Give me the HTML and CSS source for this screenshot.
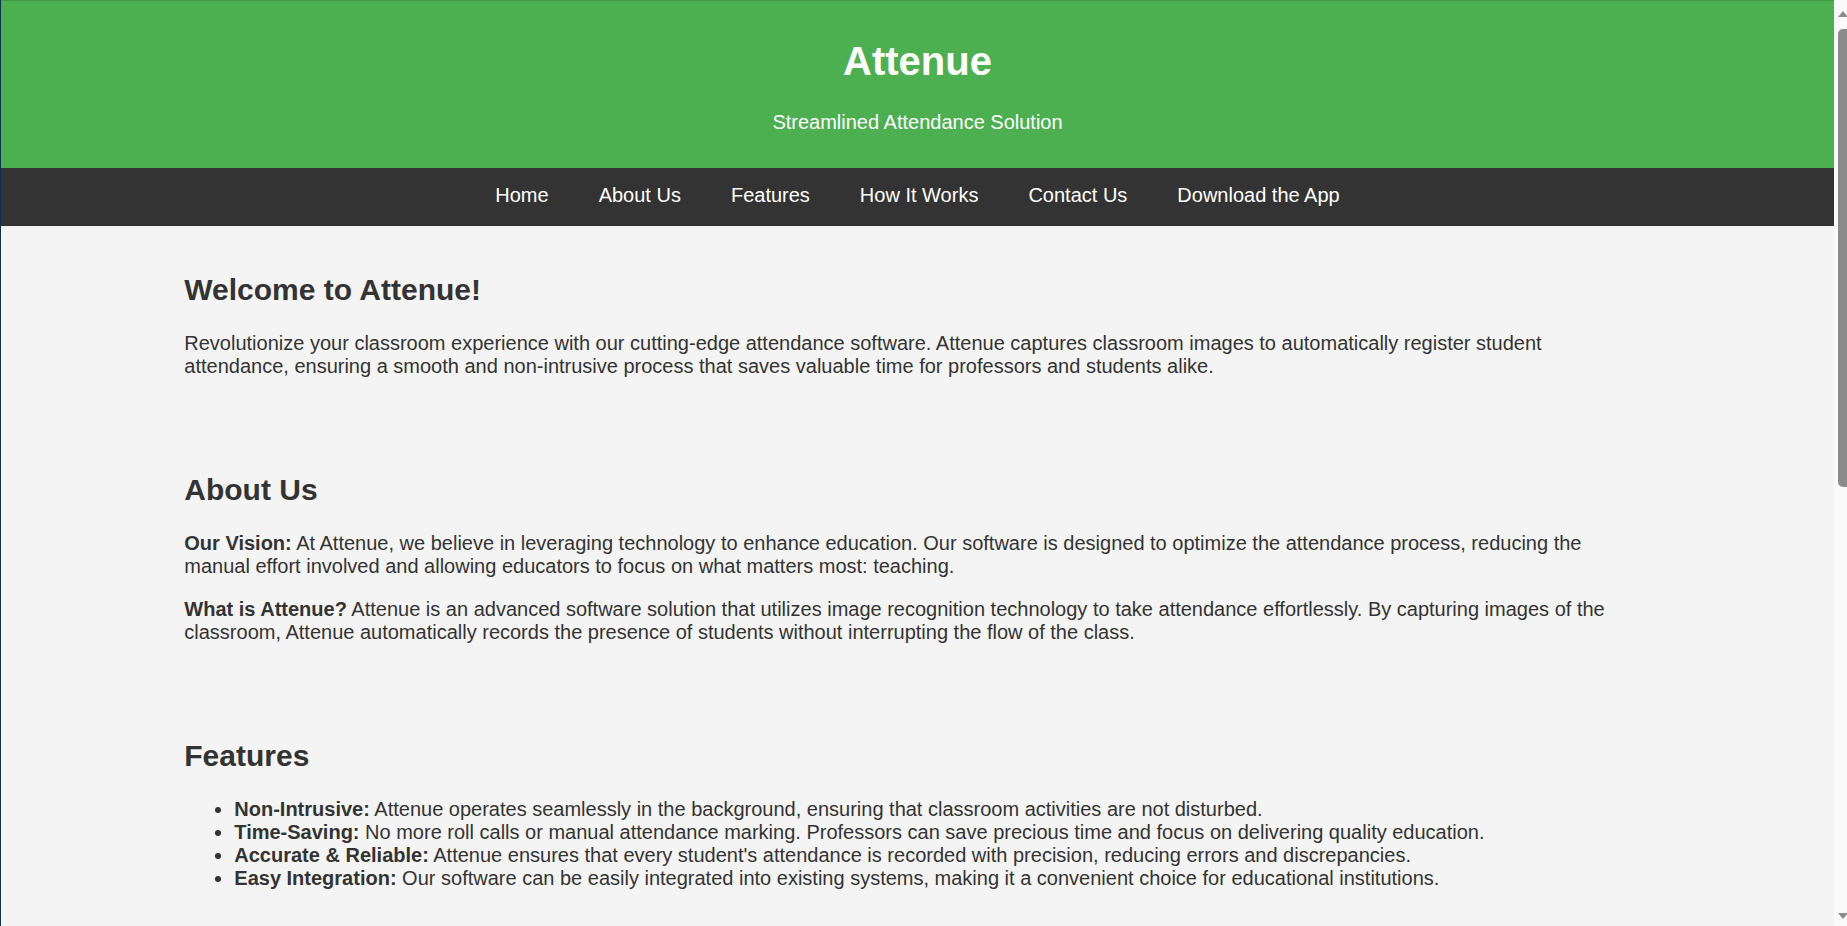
FILE: index.html
```html
<!DOCTYPE html>
<html lang="en">
<head>
<meta charset="utf-8">
<title>Attenue - Streamlined Attendance Solution</title>
<link rel="stylesheet" href="styles.css">
</head>
<body>
<header class="site-header">
  <h1 class="site-title">Attenue</h1>
  <p class="site-tagline">Streamlined Attendance Solution</p>
</header>
<nav class="site-nav">
  <a class="nav-link" href="#home">Home</a>
  <a class="nav-link" href="#about">About Us</a>
  <a class="nav-link" href="#features">Features</a>
  <a class="nav-link" href="#how">How It Works</a>
  <a class="nav-link" href="#contact">Contact Us</a>
  <a class="nav-link" href="#download">Download the App</a>
</nav>
<main class="content">
  <section class="section" id="home">
    <h2 class="section-title">Welcome to Attenue!</h2>
    <p class="text">Revolutionize your classroom experience with our cutting-edge attendance software. Attenue captures classroom images to automatically register student attendance, ensuring a smooth and non-intrusive process that saves valuable time for professors and students alike.</p>
  </section>
  <section class="section" id="about">
    <h2 class="section-title">About Us</h2>
    <p class="text"><strong>Our Vision:</strong> At Attenue, we believe in leveraging technology to enhance education. Our software is designed to optimize the attendance process, reducing the manual effort involved and allowing educators to focus on what matters most: teaching.</p>
    <p class="text"><strong>What is Attenue?</strong> Attenue is an advanced software solution that utilizes image recognition technology to take attendance effortlessly. By capturing images of the classroom, Attenue automatically records the presence of students without interrupting the flow of the class.</p>
  </section>
  <section class="section" id="features">
    <h2 class="section-title">Features</h2>
    <ul class="list">
      <li><strong>Non-Intrusive:</strong> Attenue operates seamlessly in the background, ensuring that classroom activities are not disturbed.</li>
      <li><strong>Time-Saving:</strong> No more roll calls or manual attendance marking. Professors can save precious time and focus on delivering quality education.</li>
      <li><strong>Accurate &amp; Reliable:</strong> Attenue ensures that every student's attendance is recorded with precision, reducing errors and discrepancies.</li>
      <li><strong>Easy Integration:</strong> Our software can be easily integrated into existing systems, making it a convenient choice for educational institutions.</li>
    </ul>
  </section>
  <section class="section" id="how">
    <h2 class="section-title">How It Works</h2>
    <ol class="list">
      <li><strong>Capture:</strong> A camera in the classroom takes images at the start of the lecture.</li>
      <li><strong>Recognize:</strong> Attenue identifies the students present using image recognition.</li>
      <li><strong>Register:</strong> Attendance is recorded automatically in the system.</li>
      <li><strong>Review:</strong> Professors can review and export attendance reports at any time.</li>
    </ol>
  </section>
  <section class="section" id="contact">
    <h2 class="section-title">Contact Us</h2>
    <p class="text">Have questions or want to bring Attenue to your institution? We'd love to hear from you.</p>
    <p class="text"><strong>Email:</strong> contact@attenue.com</p>
  </section>
  <section class="section" id="download">
    <h2 class="section-title">Download the App</h2>
    <p class="text">Get Attenue today and start saving time in every class.</p>
    <div class="buttons">
      <a class="button" href="#download">Download for Android</a>
      <a class="button" href="#download">Download for iOS</a>
    </div>
  </section>
</main>
<footer class="site-footer">
  <p class="footer-text">&copy; 2023 Attenue. All rights reserved.</p>
</footer>
<div class="scrollbar" aria-hidden="true">
  <div class="scroll-arrow scroll-arrow-up"></div>
  <div class="scroll-thumb"></div>
  <div class="scroll-arrow scroll-arrow-down"></div>
</div>
</body>
</html>
```

FILE: styles.css
```css
html {
  background: #fafafa;
}

body {
  margin: 0 13px 0 0;
  padding: 0;
  border-left: 1px solid #0e2f4e;
  font-family: "Liberation Sans", Arial, sans-serif;
  font-size: 20px;
  color: #333;
  background: #f4f4f4;
}

.site-header {
  background: #4caf50;
  color: #fff;
  text-align: center;
  border-top: 1px solid #429a46;
  padding: 11px 0 14px;
}

.site-title {
  font-size: 40px;
  font-weight: bold;
  margin: 27px 0;
}

.site-tagline {
  margin: 0 0 20px;
}

.site-nav {
  background: #333;
  display: flex;
  justify-content: center;
  gap: 50px;
  padding: 16px 0 19px;
}

.nav-link {
  color: #fff;
  text-decoration: none;
}

.content {
  display: block;
}

.section {
  width: 80%;
  margin: 0 auto;
  padding: 22px 0 28px;
}

.section-title {
  font-size: 30px;
  font-weight: bold;
  margin: 25px 0;
}

.text {
  margin: 20px 0;
}

.list {
  margin: 20px 0;
  padding-left: 50px;
}

.buttons {
  display: flex;
  gap: 20px;
  margin: 20px 0;
}

.button {
  display: inline-block;
  padding: 10px 25px;
  background: #4caf50;
  color: #fff;
  text-decoration: none;
  border-radius: 5px;
}

.site-footer {
  background: #333;
  color: #fff;
  text-align: center;
  padding: 42px 0;
}

.footer-text {
  margin: 20px 0;
}

/* imitation of the browser's vertical scrollbar seen in the screenshot */
.scrollbar {
  position: fixed;
  top: 0;
  right: 0;
  width: 13px;
  height: 100vh;
  background: #fafafa;
  display: flex;
  flex-direction: column;
  align-items: flex-end;
}

.scroll-arrow {
  width: 13px;
  height: 17px;
  flex: none;
  display: flex;
  justify-content: center;
  align-items: center;
}

.scroll-arrow::before {
  content: "";
  width: 0;
  height: 0;
  border-left: 5px solid transparent;
  border-right: 5px solid transparent;
  margin-left: 4px;
}

.scroll-arrow-up::before {
  border-bottom: 6px solid #8b8b8b;
  margin-top: 10px;
}

.scroll-arrow-down::before {
  border-top: 6px solid #8b8b8b;
  margin-bottom: 4px;
}

.scroll-thumb {
  width: 9px;
  height: 458px;
  margin-top: 12px;
  background: #8b8b8b;
  border-radius: 5px 0 0 5px;
  flex: none;
}

.scroll-thumb + .scroll-arrow-down {
  margin-top: auto;
}
```
